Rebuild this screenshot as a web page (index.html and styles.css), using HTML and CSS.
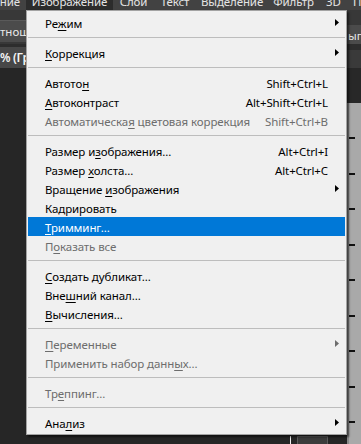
FILE: index.html
```html
<!DOCTYPE html>
<html lang="ru">
<head>
<meta charset="utf-8">
<link rel="stylesheet" href="styles.css">
</head>
<body>
<div class="app">
  <div class="menubar">
    <div class="mb-inner">
      <span class="mb-item w-edit">ние</span>
      <span class="mb-item w-img mb-active">Изображение</span>
      <span class="mb-item w-layer">Слой</span>
      <span class="mb-item w-text">Текст</span>
      <span class="mb-item w-sel">Выделение</span>
      <span class="mb-item w-filter">Фильтр</span>
      <span class="mb-item w-3d">3D</span>
      <span class="mb-item w-view">Просмотр</span>
    </div>
  </div>
  <div class="options">
    <div class="field field-left">тнош.</div>
    <div class="field field-right">ып<span class="caret"></span></div>
  </div>
  <div class="tabs">
    <div class="tab">% (Гр</div>
    <div class="tab-right"></div>
  </div>
  <div class="workspace">
    <div class="ws-main">
      <div class="ws-bottom">
        <span class="vline"></span>
        <span class="smallbox"></span>
      </div>
    </div>
    <div class="ruler">
      <div class="ruler-dark"></div>
      <div class="ruler-gray">
        <span class="tick tick-label"></span>
        <span class="tick"></span>
        <span class="tick"></span>
        <span class="tick"></span>
        <span class="tick"></span>
        <span class="tick"></span>
        <span class="tick"></span>
        <span class="tick"></span>
        <span class="tick"></span>
      </div>
    </div>
  </div>
</div>

<div class="menu">
  <div class="item"><span class="lbl">Ре<u>ж</u>им</span><span class="sc"></span><span class="arr"><svg width="4" height="7" viewBox="0 0 4 7"><polygon points="0,0 4,3.5 0,7" fill="#000"/></svg></span></div>
  <div class="sep"></div>
  <div class="item"><span class="lbl"><u>К</u>оррекция</span><span class="sc"></span><span class="arr"><svg width="4" height="7" viewBox="0 0 4 7"><polygon points="0,0 4,3.5 0,7" fill="#000"/></svg></span></div>
  <div class="sep"></div>
  <div class="item"><span class="lbl">Автото<u>н</u></span><span class="sc">Shift+Ctrl+L</span><span class="arr"></span></div>
  <div class="item"><span class="lbl"><u>А</u>втоконтраст</span><span class="sc">Alt+Shift+Ctrl+L</span><span class="arr"></span></div>
  <div class="item disabled"><span class="lbl">Автоматическа<u>я</u> цветовая коррекция</span><span class="sc">Shift+Ctrl+B</span><span class="arr"></span></div>
  <div class="sep"></div>
  <div class="item"><span class="lbl">Размер и<u>з</u>ображения...</span><span class="sc">Alt+Ctrl+I</span><span class="arr"></span></div>
  <div class="item"><span class="lbl">Размер <u>х</u>олста...</span><span class="sc">Alt+Ctrl+C</span><span class="arr"></span></div>
  <div class="item"><span class="lbl">Вращение <u>и</u>зображения</span><span class="sc"></span><span class="arr"><svg width="4" height="7" viewBox="0 0 4 7"><polygon points="0,0 4,3.5 0,7" fill="#000"/></svg></span></div>
  <div class="item"><span class="lbl">Кадрировать</span><span class="sc"></span><span class="arr"></span></div>
  <div class="item active"><span class="lbl"><u>Т</u>римминг...</span><span class="sc"></span><span class="arr"></span></div>
  <div class="item disabled"><span class="lbl">П<u>о</u>казать все</span><span class="sc"></span><span class="arr"></span></div>
  <div class="sep"></div>
  <div class="item"><span class="lbl"><u>С</u>оздать дубликат...</span><span class="sc"></span><span class="arr"></span></div>
  <div class="item"><span class="lbl">Вне<u>ш</u>ний канал...</span><span class="sc"></span><span class="arr"></span></div>
  <div class="item"><span class="lbl"><u>В</u>ычисления...</span><span class="sc"></span><span class="arr"></span></div>
  <div class="sep"></div>
  <div class="item disabled"><span class="lbl"><u>П</u>еременные</span><span class="sc"></span><span class="arr"><svg width="4" height="7" viewBox="0 0 4 7"><polygon points="0,0 4,3.5 0,7" fill="#6d6d6d"/></svg></span></div>
  <div class="item disabled"><span class="lbl">Применить набор данн<u>ы</u>х...</span><span class="sc"></span><span class="arr"></span></div>
  <div class="sep"></div>
  <div class="item disabled"><span class="lbl">Тр<u>е</u>ппинг...</span><span class="sc"></span><span class="arr"></span></div>
  <div class="sep"></div>
  <div class="item"><span class="lbl">Ана<u>л</u>из</span><span class="sc"></span><span class="arr"><svg width="4" height="7" viewBox="0 0 4 7"><polygon points="0,0 4,3.5 0,7" fill="#000"/></svg></span></div>
</div>
</body>
</html>
```

FILE: styles.css
```css
html, body {
  margin: 0;
  padding: 0;
}
body {
  width: 361px;
  height: 444px;
  overflow: hidden;
  position: relative;
  background: #262626;
  font-family: "Noto Sans", "Open Sans", sans-serif;
  font-size: 11.5px;
}
.app {
  display: flex;
  flex-direction: column;
  height: 444px;
}

/* top menubar (cut off by the screenshot) */
.menubar {
  flex: none;
  height: 10px;
  overflow: hidden;
  background: #424242;
  color: #e4e4e4;
}
.mb-inner {
  display: flex;
  margin-top: -7px;
  line-height: 18px;
  white-space: nowrap;
  letter-spacing: -0.1px;
}
.mb-item {
  flex: none;
  text-align: center;
  overflow: hidden;
}
.mb-active { background: #2c2c2c; }
.w-edit { width: 20px; padding-right: 6px; text-align: right; direction: rtl; }
.w-img { width: 87px; }
.w-layer { width: 41px; }
.w-text { width: 42px; }
.w-sel { width: 72px; }
.w-filter { width: 51px; }
.w-3d { width: 29px; }
.w-view { flex: 1; text-align: left; padding-left: 5px; }

/* options bar */
.options {
  flex: none;
  height: 34px;
  background: #383838;
  display: flex;
  justify-content: space-between;
  align-items: flex-start;
}
.field {
  background: #4b4b4b;
  color: #e8e8e8;
  white-space: nowrap;
  overflow: hidden;
}
.field-left {
  margin-top: 10px;
  width: 26px;
  height: 22px;
  line-height: 22px;
  border-top: 1px solid #5a5a5a;
  box-sizing: border-box;
}
.field-right {
  margin-top: 15px;
  width: 14px;
  height: 22px;
  line-height: 22px;
  display: flex;
  align-items: center;
  padding-left: 1px;
  box-sizing: border-box;
}
.caret {
  display: inline-block;
  width: 2px;
  height: 9px;
  background: #3a8ee6;
  margin-left: 1px;
}

/* document tab bar */
.tabs {
  flex: none;
  height: 24px;
  background: #2d2d2d;
  display: flex;
  justify-content: space-between;
  align-items: flex-start;
}
.tab {
  margin-top: 3px;
  width: 26px;
  height: 21px;
  line-height: 21px;
  background: #474747;
  color: #f4f4f4;
  font-size: 12px;
  font-weight: 600;
  letter-spacing: -0.3px;
  white-space: nowrap;
  overflow: hidden;
}
.tab-right {
  margin-top: 6px;
  width: 14px;
  height: 25px;
  background: #3a3a3a;
}

/* workspace */
.workspace {
  flex: 1;
  display: flex;
  min-height: 0;
}
.ws-main {
  flex: 1;
  background: #262626;
  display: flex;
  flex-direction: column;
  justify-content: flex-end;
}
.ws-bottom {
  height: 8px;
  display: flex;
  padding-left: 290px;
}
.vline {
  width: 1px;
  background: #f0f0f0;
}
.smallbox {
  margin-left: 6px;
  width: 31px;
  background: #3c3c3c;
  border: 1px solid #5c5c5c;
  border-bottom: none;
  box-sizing: border-box;
}
.ruler {
  width: 14px;
  display: flex;
  flex-direction: column;
}
.ruler-dark {
  flex: none;
  height: 35px;
  background: #282828;
}
.ruler-gray {
  flex: 1;
  background: #a9a9a9;
  display: flex;
  flex-direction: column;
  gap: 33.5px;
  padding-top: 34px;
  border-left: 2px solid #8a8a8a;
  box-sizing: border-box;
}
.tick {
  width: 6px;
  height: 2px;
  background: #111;
  flex: none;
}

/* dropdown menu */
.menu {
  position: absolute;
  left: 26px;
  top: 10px;
  width: 321px;
  box-sizing: border-box;
  background: #f0f0f0;
  border: 1px solid #a3a3a3;
  padding: 2px 1px;
  box-shadow: 2px 2px 2px rgba(0, 0, 0, 0.55);
  color: #000;
  font-size: 11.5px;
  letter-spacing: -0.1px;
}
.item {
  display: grid;
  grid-template-columns: 1fr auto 17px;
  align-items: start;
  height: 19px;
  box-sizing: border-box;
  padding-top: 2px;
  line-height: 17px;
  padding-left: 17px;
  white-space: nowrap;
}
.item u {
  text-decoration: underline;
  text-underline-offset: 2px;
}
.sc {
  text-align: right;
}
.arr {
  display: flex;
  align-items: center;
  padding-left: 7px;
  height: 15px;
}
.disabled { color: #6d6d6d; }
.active {
  background: #0078d7;
  color: #fff;
}
.sep {
  height: 11px;
  display: flex;
  align-items: center;
}
.sep::before {
  content: "";
  flex: 1;
  height: 1px;
  background: #bdbdbd;
}
```
